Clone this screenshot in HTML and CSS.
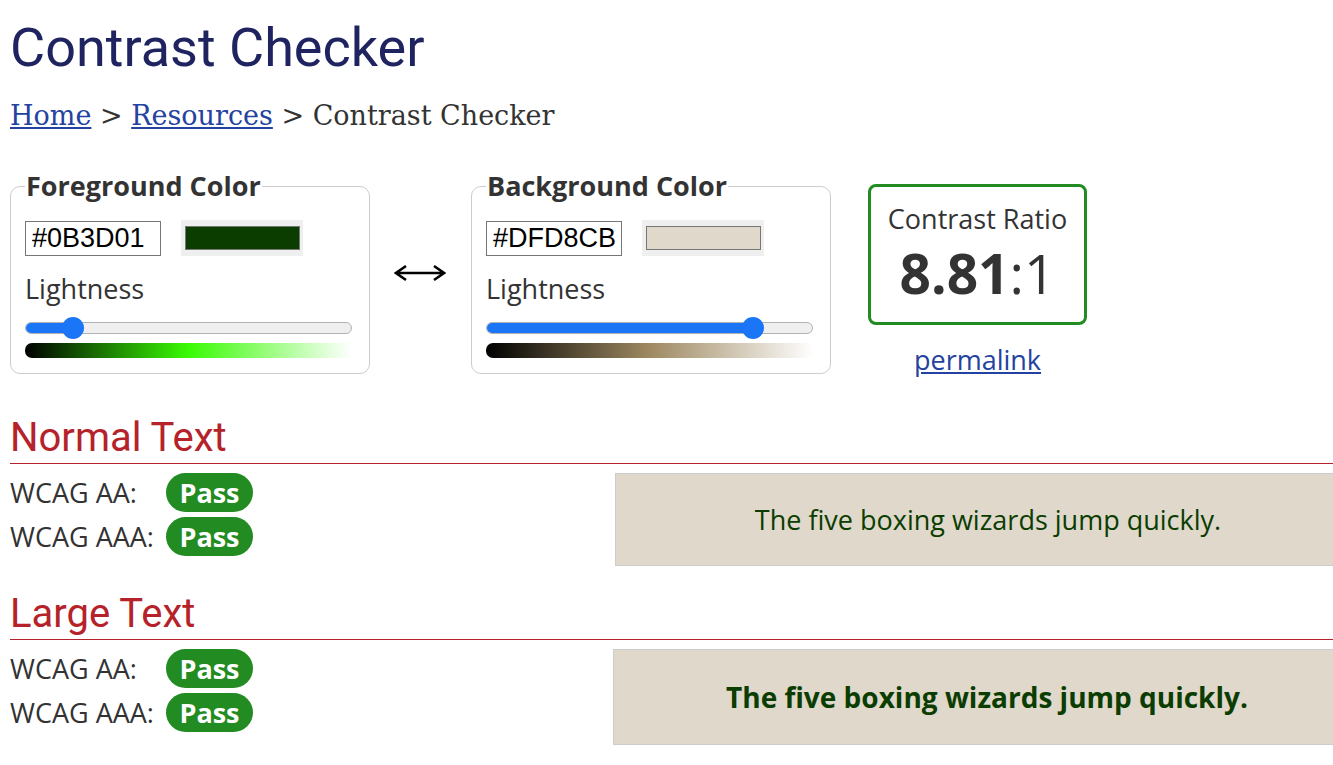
FILE: index.html
```html
<!DOCTYPE html>
<html lang="en">
<head>
<meta charset="utf-8">
<title>Contrast Checker</title>
<link rel="stylesheet" href="styles.css">
</head>
<body>
<div class="page">
  <h1 class="title">Contrast Checker</h1>
  <nav class="crumbs"><a href="#">Home</a> &gt; <a href="#">Resources</a> &gt; Contrast Checker</nav>

  <div class="tools">
    <fieldset class="picker">
      <legend>Foreground Color</legend>
      <div class="hexrow">
        <input class="hex" type="text" value="#0B3D01">
        <div class="swatch"><span class="swatch-fill fg-fill"></span></div>
      </div>
      <div class="label">Lightness</div>
      <div class="slider">
        <div class="track"><div class="fill" style="width: 47px"></div></div>
        <div class="thumb" style="left: 37px"></div>
      </div>
      <div class="grad fg-grad"></div>
    </fieldset>

    <div class="swap">
      <svg width="52" height="18" viewBox="0 0 52 18" aria-label="swap colors">
        <path d="M2 9 H50 M12 2 L2 9 L12 16 M40 2 L50 9 L40 16" fill="none" stroke="#000" stroke-width="2.6" stroke-linejoin="miter"/>
      </svg>
    </div>

    <fieldset class="picker">
      <legend>Background Color</legend>
      <div class="hexrow">
        <input class="hex" type="text" value="#DFD8CB">
        <div class="swatch"><span class="swatch-fill bg-fill"></span></div>
      </div>
      <div class="label">Lightness</div>
      <div class="slider">
        <div class="track"><div class="fill" style="width: 267px"></div></div>
        <div class="thumb" style="left: 256px"></div>
      </div>
      <div class="grad bg-grad"></div>
    </fieldset>

    <div class="ratio-col">
      <div class="ratio-box">
        <div class="ratio-label">Contrast Ratio</div>
        <div class="ratio-value"><b>8.81</b>:1</div>
      </div>
      <a class="permalink" href="#">permalink</a>
    </div>
  </div>

  <section class="result">
    <h2 class="section-title">Normal Text</h2>
    <div class="result-body">
      <div class="checks">
        <div class="check"><span class="check-label">WCAG AA:</span><span class="badge">Pass</span></div>
        <div class="check"><span class="check-label">WCAG AAA:</span><span class="badge">Pass</span></div>
      </div>
      <div class="sample sample-normal">The five boxing wizards jump quickly.</div>
    </div>
  </section>

  <section class="result">
    <h2 class="section-title">Large Text</h2>
    <div class="result-body">
      <div class="checks">
        <div class="check"><span class="check-label">WCAG AA:</span><span class="badge">Pass</span></div>
        <div class="check"><span class="check-label">WCAG AAA:</span><span class="badge">Pass</span></div>
      </div>
      <div class="sample sample-large">The five boxing wizards jump quickly.</div>
    </div>
  </section>
</div>
</body>
</html>
```

FILE: styles.css
```css
html, body {
  margin: 0;
  padding: 0;
  background: #fff;
  overflow: hidden;
}

body {
  font-family: "Open Sans", "Noto Sans", sans-serif;
  color: #333;
}

.page {
  width: 1351px;
  padding-left: 10px;
}

.title {
  font-family: Roboto, "Liberation Sans", sans-serif;
  font-weight: 400;
  font-size: 54px;
  line-height: 60px;
  color: #1f2460;
  margin: 18px 0 0 0;
}

.crumbs {
  font-family: "DejaVu Serif", "Liberation Serif", serif;
  font-size: 27px;
  line-height: 30px;
  color: #333;
  margin-top: 23px;
}

.crumbs a {
  color: #2442a0;
}

.tools {
  display: flex;
  align-items: flex-start;
  margin-top: 40px;
}

.picker {
  width: 360px;
  box-sizing: border-box;
  margin: 0;
  border: 1px solid #cccccc;
  border-radius: 10px;
  padding: 0 0 15px 14px;
}

.picker legend {
  font-weight: 700;
  font-size: 27px;
  line-height: 30px;
  color: #333;
  padding: 0 1px;
  margin-left: 0;
}

.hexrow {
  display: flex;
  align-items: center;
  margin-top: 19px;
}

.hex {
  width: 136px;
  height: 35px;
  box-sizing: border-box;
  border: 1px solid #767676;
  border-radius: 0;
  padding: 0 2px 0 6px;
  font-family: "Liberation Sans", Arial, sans-serif;
  font-size: 27px;
  color: #000;
  margin: 0;
}

.swatch {
  margin-left: 20px;
  width: 122px;
  height: 36px;
  background: #efefef;
  padding: 6px 3px 6px 4px;
  box-sizing: border-box;
  display: flex;
}

.swatch-fill {
  flex: 1;
  border: 1px solid #767676;
}

.fg-fill { background: #0B3D01; }
.bg-fill { background: #DFD8CB; }

.label {
  font-size: 27px;
  line-height: 30px;
  margin-top: 18px;
}

.slider {
  position: relative;
  width: 327px;
  height: 22px;
  margin-top: 13px;
  display: flex;
  align-items: center;
}

.track {
  width: 100%;
  height: 12px;
  box-sizing: border-box;
  background: #efefef;
  border: 1px solid #b2b2b2;
  border-radius: 6px;
  overflow: hidden;
}

.fill {
  height: 100%;
  background: #1a75f7;
}

.thumb {
  position: absolute;
  top: 0;
  width: 22px;
  height: 22px;
  border-radius: 50%;
  background: #1a75f7;
}

.grad {
  width: 327px;
  height: 15px;
  margin-top: 4px;
  border-radius: 7px 0 0 7px;
}

.fg-grad {
  background: linear-gradient(to right, hsl(107, 97%, 0%), hsl(107, 97%, 50%), hsl(107, 97%, 100%));
}

.bg-grad {
  background: linear-gradient(to right, hsl(39, 24%, 0%), hsl(39, 24%, 50%), hsl(39, 24%, 100%));
}

.swap {
  width: 101px;
  display: flex;
  justify-content: center;
  margin-top: 93px;
}

.swap svg {
  display: block;
  margin-left: -2px;
}

.ratio-col {
  margin-left: 37px;
  display: flex;
  flex-direction: column;
  align-items: center;
  margin-top: 13px;
}

.ratio-box {
  width: 219px;
  height: 141px;
  box-sizing: border-box;
  border: 3px solid #228b22;
  border-radius: 8px;
  text-align: center;
  padding-top: 15px;
}

.ratio-label {
  font-size: 27px;
  line-height: 34px;
}

.ratio-value {
  font-size: 55px;
  line-height: 64px;
  margin-top: 5px;
}

.ratio-value b {
  font-weight: 700;
}

.permalink {
  font-size: 27px;
  line-height: 34px;
  color: #2442a0;
  margin-top: 18px;
}

.result {
  margin-top: 38px;
}

.result + .result {
  margin-top: 25px;
}

.section-title {
  font-family: Roboto, "Liberation Sans", sans-serif;
  font-weight: 400;
  font-size: 40px;
  line-height: 46px;
  color: #b5222a;
  margin: 0;
  padding-bottom: 2px;
  border-bottom: 1px solid #b5222a;
}

.result-body {
  display: grid;
  grid-template-columns: 605px 1fr;
  margin-top: 9px;
}

.checks {
  display: flex;
  flex-direction: column;
  gap: 5px;
}

.check {
  display: flex;
  align-items: center;
  height: 39px;
}

.check-label {
  width: 156px;
  font-size: 27px;
}

.badge {
  display: inline-flex;
  align-items: center;
  justify-content: center;
  width: 87px;
  height: 39px;
  border-radius: 20px;
  background: #228b22;
  color: #fff;
  font-weight: 700;
  font-size: 27px;
}

.sample {
  background: #DFD8CB;
  color: #0B3D01;
  border: 1px solid #cccccc;
  display: flex;
  align-items: center;
  justify-content: center;
}

.sample-normal {
  height: 93px;
  box-sizing: border-box;
  font-size: 27px;
}

.sample-large {
  height: 96px;
  box-sizing: border-box;
  margin-left: -2px;
  font-size: 28px;
  font-weight: 700;
}
```
